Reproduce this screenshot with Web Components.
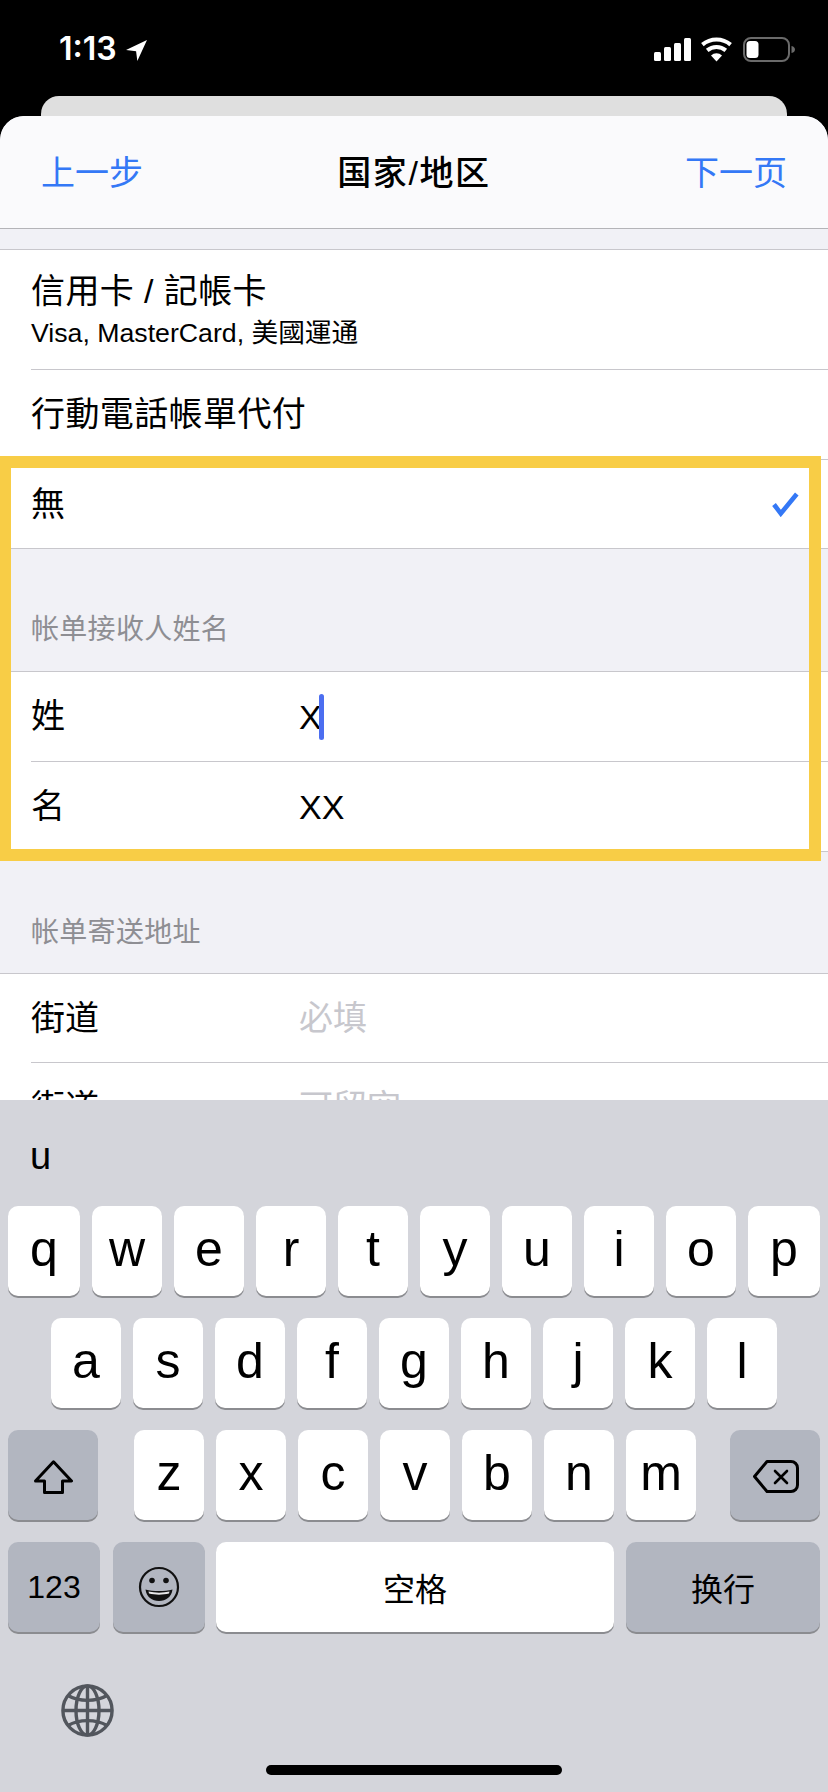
<!DOCTYPE html>
<html lang="zh">
<head>
<meta charset="utf-8">
<title>国家/地区</title>
<style>
  html, body { margin: 0; padding: 0; background: #000; }
  body { font-family: "Liberation Sans", "Noto Sans CJK SC", sans-serif; }
  .tc { font-family: "Liberation Sans", "Noto Sans CJK TC", sans-serif; white-space: nowrap; letter-spacing: .4px; }
  .hint { color: #c7c7cd; margin-bottom: 2px; }
</style>
</head>
<body>
<template id="t-status-bar">
  <style>
    :host { display: block; height: 116px; background: #000; color: #fff; box-sizing: border-box; }
    .top { height: 96px; display: flex; align-items: flex-start; justify-content: space-between; }
    .left { display: flex; margin: 31px 0 0 59px; align-items: center; gap: 9px; }
    .time { font: 600 32px/36px Inter, "Liberation Sans", sans-serif; letter-spacing: 0; }
    .left svg { margin-top: 2px; }
    .right { display: flex; margin: 37px 33px 0 0; align-items: flex-start; }
    .bars { margin: 1px 10px 0 0; }
    .wifi { margin-right: 11px; }
    .battery { display: block; }
    .back { height: 20px; margin: 0 41px; background: #dfdfdf; border-radius: 18px 18px 0 0; }
  </style>
  <div class="top">
    <div class="left">
      <span class="time"><slot></slot></span>
      <svg width="21" height="21" viewBox="0 0 20 20"><path d="M20 0 L0 9.5 L9.6 10.6 L10.8 20 Z" fill="#fff"/></svg>
    </div>
    <div class="right">
      <svg class="bars" width="37" height="23" viewBox="0 0 37 23" fill="#fff">
        <rect x="0" y="14" width="7" height="9" rx="1.5"/>
        <rect x="10" y="9" width="7" height="14" rx="1.5"/>
        <rect x="20" y="5" width="7" height="18" rx="1.5"/>
        <rect x="30" y="0" width="7" height="23" rx="1.5"/>
      </svg>
      <svg class="wifi" width="31" height="25" viewBox="0 0 31 25" fill="none" stroke="#fff" stroke-width="4">
        <path d="M1.4 7.65 A22 22 0 0 1 29.6 7.65"/>
        <path d="M6.2 13.4 A14.5 14.5 0 0 1 24.8 13.4"/>
        <path d="M15.5 24.5 L10 18.5 A8 8 0 0 1 21 18.5 Z" fill="#fff" stroke="none"/>
      </svg>
      <svg class="battery" width="52" height="25" viewBox="0 0 52 25">
        <rect x="1" y="1" width="45" height="23" rx="7" fill="none" stroke="#6a6a6a" stroke-width="2"/>
        <rect x="3.5" y="4" width="12" height="17" rx="3.5" fill="#fff"/>
        <path d="M48.5 9 C51 9.5 52 11 52 12.5 C52 14 51 15.5 48.5 16 Z" fill="#6a6a6a"/>
      </svg>
    </div>
  </div>
  <div class="back"></div>
</template>

<template id="t-nav-header">
  <style>
    :host { display: grid; grid-template-columns: 1fr auto 1fr; align-items: center; height: 113px; box-sizing: border-box;
      padding: 0 41px 3px; background: #fafafc; border-bottom: 1px solid #b4b4b8; border-radius: 24px 24px 0 0; font-size: 34px; }
    .title { font-weight: 500; color: #000; letter-spacing: 1.6px; }
    .link { color: #3478f6; }
    .end { text-align: right; }
  </style>
  <span class="link"><slot name="back"></slot></span>
  <span class="title"><slot></slot></span>
  <span class="link end"><slot name="next"></slot></span>
</template>

<template id="t-form-row">
  <style>
    :host { display: flex; align-items: center; height: 90px; box-sizing: border-box; padding-left: 31px; background: #fff;
      color: #000; font-size: 34px; line-height: 40px; position: relative; }
    :host::after { content: ""; position: absolute; left: 31px; right: 0; bottom: 0; height: 1px; background: #c8c7cc; }
    :host([full])::after { left: 0; }
    .label { width: 268px; flex: none; margin-bottom: 2px; }
    .value { flex: 1; display: flex; align-items: center; padding-right: 31px; justify-content: space-between; }
  </style>
  <span class="label"><slot></slot></span>
  <span class="value"><slot name="value"></slot></span>
</template>

<template id="t-section-header">
  <style>
    :host { display: flex; align-items: flex-end; box-sizing: border-box; padding: 0 0 23px 31px; background: #f1f1f6;
      color: #8e8e93; font-size: 28px; line-height: 36px; letter-spacing: .3px; border-bottom: 1px solid #c8c7cc; }
  </style>
  <slot></slot>
</template>

<template id="t-highlight-frame">
  <style>
    :host { position: absolute; left: -1px; top: 340px; width: 822px; height: 405px; box-sizing: border-box;
      border: 12px solid #f8cd46; pointer-events: none; }
  </style>
</template>

<template id="t-kb-key">
  <style>
    :host { display: flex; align-items: center; justify-content: center; box-sizing: border-box; width: 70px; height: 90px;
      padding-bottom: 5px; background: #fff; color: #000; border-radius: 10px; box-shadow: 0 2px 0 #8b8c90;
      font-size: 50px; flex: none; }
    :host([fn]) { background: #b2b6c0; }
    :host([small]) { font-size: 32px; padding-bottom: 0; }
  </style>
  <slot></slot>
</template>

<template id="t-ios-keyboard">
  <style>
    :host { display: block; height: 692px; background: #d4d5db; color: #000; }
    .cand { height: 106px; box-sizing: border-box; padding: 34px 0 0 30px; font-size: 38px; line-height: 44px; }
    .rows { display: flex; flex-direction: column; gap: 22px; padding: 0 8px; }
    .row { display: flex; gap: 12px; }
    .center { justify-content: center; }
    .bottom { display: flex; flex-direction: column; height: 160px; }
    .globe { margin: 52px 0 0 61px; display: block; }
    .home { align-self: center; margin-top: 28px; width: 296px; height: 10px; border-radius: 5px; background: #000; }
  </style>
  <div class="cand"><slot name="candidate"></slot></div>
  <div class="rows">
    <div class="row"><slot name="r1"></slot></div>
    <div class="row center"><slot name="r2"></slot></div>
    <div class="row"><slot name="r3"></slot></div>
    <div class="row"><slot name="r4"></slot></div>
  </div>
  <div class="bottom">
    <svg class="globe" width="53" height="53" viewBox="0 0 53 53" fill="none" stroke="#52565d" stroke-width="3.4">
      <circle cx="26.5" cy="26.5" r="24.6"/>
      <ellipse cx="26.5" cy="26.5" rx="11.5" ry="24.6"/>
      <path d="M26.5 2 V51 M2 26.5 H51"/>
      <path d="M7 11.5 C18 18 35 18 46 11.5"/>
      <path d="M7 41.5 C18 35 35 35 46 41.5"/>
    </svg>
    <div class="home"></div>
  </div>
</template>

<template id="t-app-screen">
  <style>
    :host { display: flex; flex-direction: column; width: 828px; height: 1792px; overflow: hidden; background: #000; }
    .sheet { position: relative; flex: 1; min-height: 0; overflow: hidden; background: #f1f1f6; border-radius: 24px 24px 0 0; }
  </style>
  <slot name="status"></slot>
  <div class="sheet"><slot></slot></div>
  <slot name="keyboard"></slot>
</template>

<app-screen>
  <status-bar slot="status">1:13</status-bar>

  <nav-header>
    <span slot="back">上一步</span>
    国家/地区
    <span slot="next">下一页</span>
  </nav-header>
  <section-header style="height:21px;padding:0"></section-header>

  <form-row style="height:120px">
    <div class="tc" style="line-height:42px">信用卡 / 記帳卡</div>
    <div class="tc" style="font-size:26.7px;line-height:32px;margin-top:5px;letter-spacing:0">Visa, MasterCard, 美國運通</div>
  </form-row>
  <form-row><span class="tc">行動電話帳單代付</span></form-row>
  <form-row full style="height:89px">
    <span class="tc">無</span>
    <svg slot="value" style="margin-left:auto;margin-right:-2px" width="27" height="25" viewBox="0 0 27 25" fill="none" stroke="#3478f6" stroke-width="4.6"><path d="M2 12.5 L8.8 21.5 L24.8 2"/></svg>
  </form-row>

  <section-header style="height:123px">帐单接收人姓名</section-header>
  <form-row>姓<span slot="value" style="display:flex;align-items:center;height:46px">X<i style="display:block;width:5px;height:46px;margin-left:-3px;border-radius:3px;background:#4c6ef0"></i><span style="flex:1"></span></span></form-row>
  <form-row full>名<span slot="value">XX</span></form-row>

  <section-header style="height:122px;padding-bottom:22px">帐单寄送地址</section-header>
  <form-row style="height:89px">街道<span slot="value" class="hint">必填</span></form-row>
  <form-row>街道<span slot="value" class="hint">可留空</span></form-row>

  <highlight-frame></highlight-frame>

  <ios-keyboard slot="keyboard">
    <span slot="candidate">u</span>
    <kb-key slot="r1" style="width:72px">q</kb-key><kb-key slot="r1">w</kb-key><kb-key slot="r1">e</kb-key><kb-key slot="r1">r</kb-key><kb-key slot="r1">t</kb-key><kb-key slot="r1">y</kb-key><kb-key slot="r1">u</kb-key><kb-key slot="r1">i</kb-key><kb-key slot="r1">o</kb-key><kb-key slot="r1" style="width:72px">p</kb-key>
    <kb-key slot="r2">a</kb-key><kb-key slot="r2">s</kb-key><kb-key slot="r2">d</kb-key><kb-key slot="r2">f</kb-key><kb-key slot="r2">g</kb-key><kb-key slot="r2">h</kb-key><kb-key slot="r2">j</kb-key><kb-key slot="r2">k</kb-key><kb-key slot="r2">l</kb-key>
    <kb-key slot="r3" fn style="width:90px;margin-right:24px;padding-bottom:0">
      <svg width="39" height="34" viewBox="0 0 39 34" fill="none" stroke="#000" stroke-width="3" stroke-linejoin="round" style="display:block;margin-top:3px"><path d="M19.5 1.8 L37.5 21 H28.5 V32.5 H10.5 V21 H1.5 Z"/></svg>
    </kb-key>
    <kb-key slot="r3">z</kb-key><kb-key slot="r3">x</kb-key><kb-key slot="r3">c</kb-key><kb-key slot="r3">v</kb-key><kb-key slot="r3">b</kb-key><kb-key slot="r3">n</kb-key><kb-key slot="r3">m</kb-key>
    <kb-key slot="r3" fn style="width:90px;margin-left:22px;padding-bottom:0">
      <svg width="46" height="33" viewBox="0 0 46 33" fill="none" stroke="#000" stroke-width="3" stroke-linejoin="round" stroke-linecap="round" style="display:block;margin:3px 0 0 2px"><path d="M14 1.5 H38 A6.5 6.5 0 0 1 44.5 8 V25 A6.5 6.5 0 0 1 38 31.5 H14 L1.5 16.5 Z"/><path d="M22 11 L34 23 M34 11 L22 23" stroke-width="2.6"/></svg>
    </kb-key>
    <kb-key slot="r4" fn small style="width:92px;margin-right:1px">123</kb-key>
    <kb-key slot="r4" fn style="width:92px;margin-right:-1px;padding-bottom:0">
      <svg width="42" height="42" viewBox="0 0 42 42" style="display:block">
        <circle cx="21" cy="21" r="19" fill="none" stroke="#111" stroke-width="2.2"/>
        <circle cx="14" cy="14.5" r="2.8" fill="#111"/><circle cx="28" cy="14.5" r="2.8" fill="#111"/>
        <path d="M7.5 23.5 C15 25.5 27 25.5 34.5 23.5 C33.5 31 28 35 21 35 C14 35 8.5 31 7.5 23.5 Z" fill="#111"/>
        <path d="M10.5 25.5 C17 27 25 27 31.5 25.5 L31 27.6 C25 29 17 29 11 27.6 Z" fill="#e8e8ea"/>
      </svg>
    </kb-key>
    <kb-key slot="r4" small style="width:398px">空格</kb-key>
    <kb-key slot="r4" fn small style="width:194px">换行</kb-key>
  </ios-keyboard>
</app-screen>

<script>
  // every element just clones its template into an open shadow root
  const names = ['status-bar', 'nav-header', 'form-row', 'section-header', 'highlight-frame', 'kb-key', 'ios-keyboard', 'app-screen'];
  for (const name of names) {
    customElements.define(name, class extends HTMLElement {
      constructor() {
        super();
        this.attachShadow({ mode: 'open' }).appendChild(document.getElementById('t-' + name).content.cloneNode(true));
      }
    });
  }
</script>
</body>
</html>
